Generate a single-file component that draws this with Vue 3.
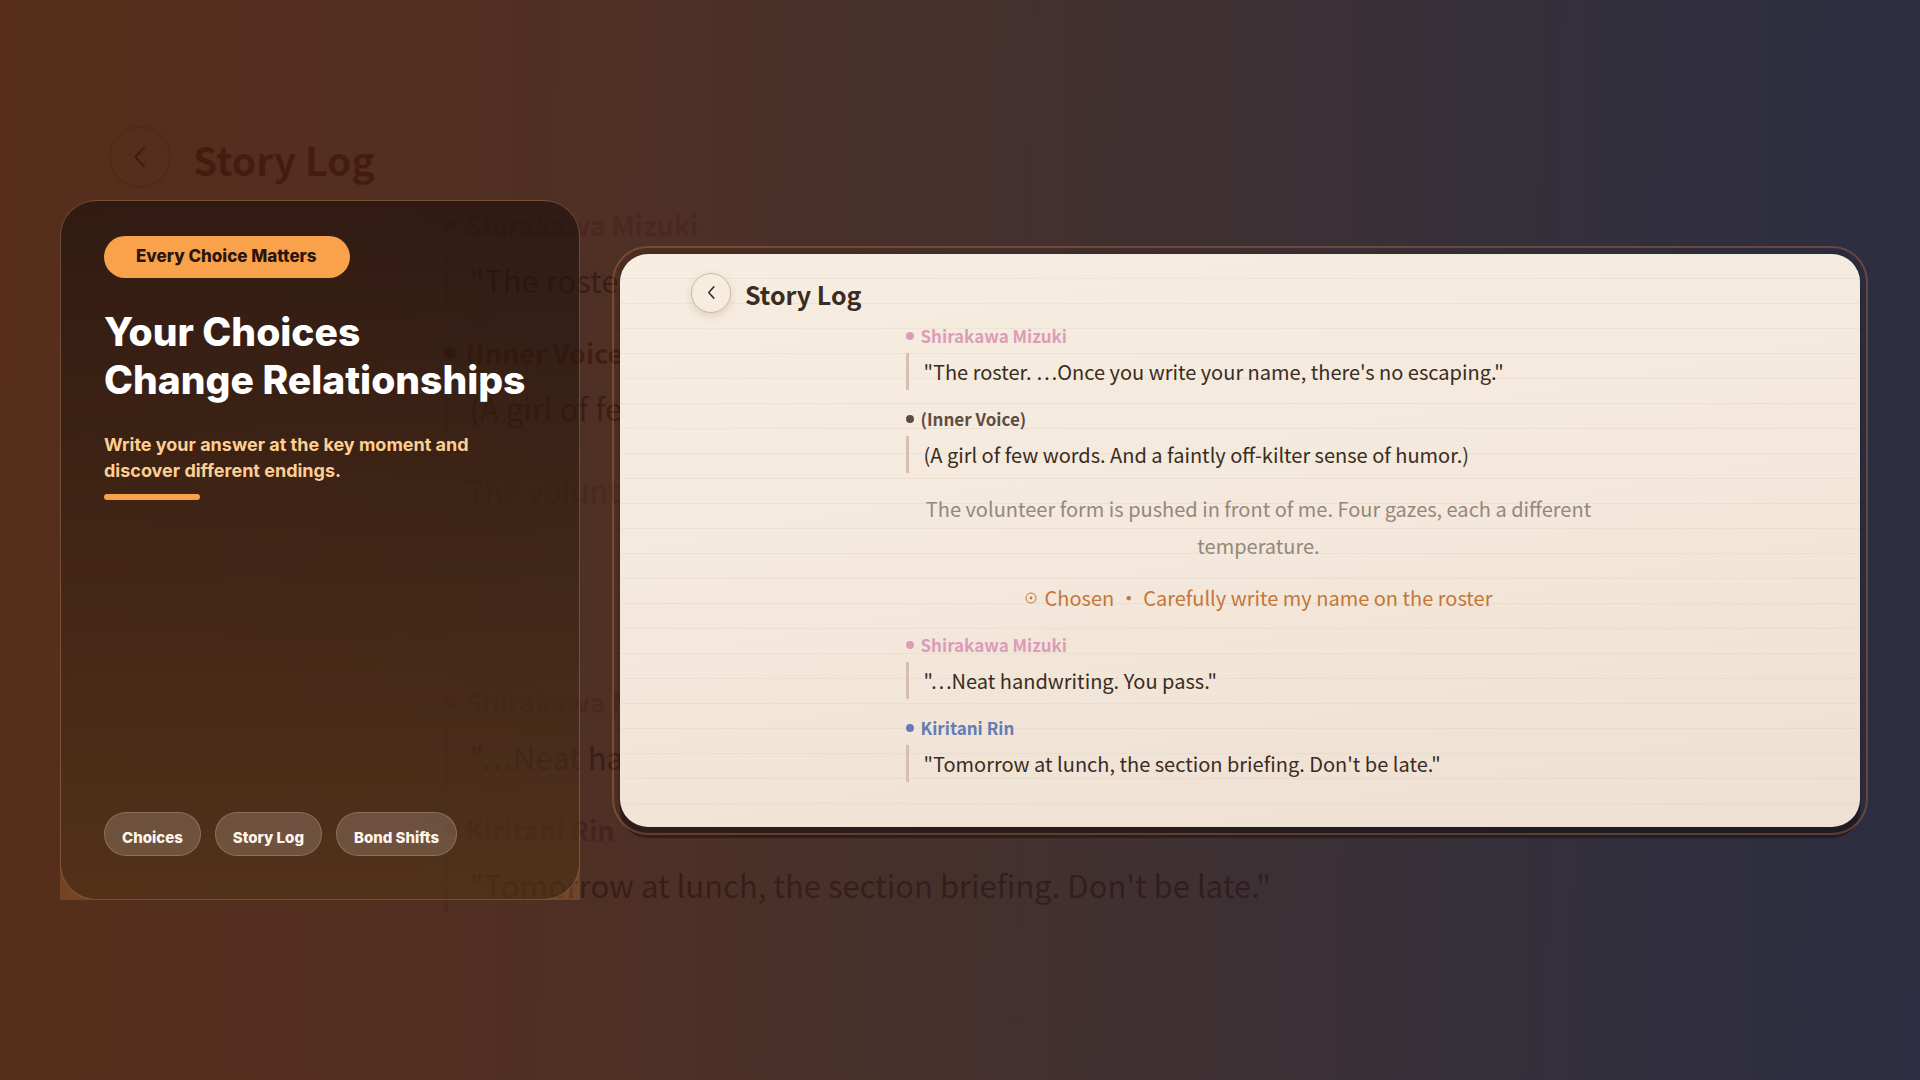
<script setup>
const entries = [
  { kind: 'line', tone: 'pink', name: 'Shirakawa Mizuki', text: '"The roster. …Once you write your name, there\'s no escaping."', peek: '"The roster.' },
  { kind: 'line', tone: 'brown', name: '(Inner Voice)', text: '(A girl of few words. And a faintly off-kilter sense of humor.)', peek: '(A girl of few' },
  { kind: 'narration', text: 'The volunteer form is pushed in front of me. Four gazes, each a different temperature.', peek: 'The volunteer' },
  { kind: 'choice', text: 'Chosen ・ Carefully write my name on the roster', peek: '' },
  { kind: 'line', tone: 'pink', name: 'Shirakawa Mizuki', text: '"…Neat handwriting. You pass."', peek: '"…Neat hand' },
  { kind: 'line', tone: 'blue', name: 'Kiritani Rin', text: '"Tomorrow at lunch, the section briefing. Don\'t be late."', peek: '"Tomorrow at lunch, the section briefing. Don\'t be late."' },
]
// The backdrop is mostly covered by the panel, so it carries only the openings of the lines.
const layers = [
  { id: 'backdrop', field: 'peek', hidden: true },
  { id: 'panel', field: 'text', hidden: false },
]
const tags = ['Choices', 'Story Log', 'Bond Shifts']
</script>

<template>
  <main class="page">
    <aside class="card">
      <p class="pill">Every Choice Matters</p>
      <h1 class="headline">Your Choices<br />Change Relationships</h1>
      <p class="lead">Write your answer at the key moment and discover different endings.</p>
      <span class="rule"></span>
      <ul class="tags">
        <li v-for="tag in tags" :key="tag" class="tag">{{ tag }}</li>
      </ul>
    </aside>

    <section v-for="layer in layers" :key="layer.id" :class="['story', layer.id]" :aria-hidden="layer.hidden">
      <header class="bar">
        <button class="back" type="button" aria-label="Back" :tabindex="layer.hidden ? -1 : 0">
          <svg class="chevron" viewBox="0 0 16 16" fill="none" stroke="currentColor" stroke-width="1.6" stroke-linecap="round" stroke-linejoin="round">
            <path d="M10.5 2 L5 8 L10.5 14" />
          </svg>
        </button>
        <h2 class="title">Story Log</h2>
      </header>
      <div class="log">
        <article v-for="(entry, i) in entries" :key="i" :class="['entry', entry.kind, entry.tone]">
          <template v-if="entry.kind === 'line'">
            <h3 class="name"><span class="dot"></span>{{ entry.name }}</h3>
            <p class="quote">{{ entry[layer.field] }}</p>
          </template>
          <template v-else>
            <svg v-if="entry.kind === 'choice' && !layer.hidden" class="mark" viewBox="0 0 12 12" fill="none" stroke="currentColor">
              <circle cx="6" cy="6" r="5" />
              <circle cx="6" cy="6" r="1.4" fill="currentColor" stroke="none" />
            </svg>
            <p class="body">{{ entry[layer.field] }}</p>
          </template>
        </article>
      </div>
    </section>
  </main>
</template>

<style>
body {
  margin: 0;
  background: #2c2c42;
}
</style>

<style scoped>
.page {
  position: relative;
  isolation: isolate;
  box-sizing: border-box;
  display: flex;
  align-items: center;
  gap: 40px;
  min-height: 100vh;
  padding: 60px;
  overflow: hidden;
  background: linear-gradient(91deg, #562e1b 0%, #532f20 20%, #4c3027 38%, #403032 60%, #34303b 80%, #2c2d42 100%);
  font-family: "Noto Sans CJK JP", "Noto Sans", sans-serif;
}
h1, h2, h3, p, ul {
  margin: 0;
  padding: 0;
}

/* promo card */
.card {
  position: relative;
  box-sizing: border-box;
  display: flex;
  flex-direction: column;
  align-items: flex-start;
  flex: none;
  width: 520px;
  min-height: 700px;
  margin-top: 20px;
  padding: 35px 43px 43px;
  border: 1px solid rgba(255, 190, 150, 0.28);
  border-radius: 36px;
  background: linear-gradient(180deg, rgba(28, 15, 12, 0.62), rgba(56, 36, 18, 0.58));
  font-family: Inter, sans-serif;
}
.card::after {
  content: "";
  position: absolute;
  inset: -1px;
  z-index: -1;
  background: linear-gradient(180deg, rgba(250, 155, 60, 0) 0%, rgba(250, 155, 60, 0.2) 100%);
}
.pill {
  padding: 0 33px 2px 32px;
  border-radius: 21px;
  background: #f9a14b;
  color: #2a160c;
  font-size: 17px;
  font-weight: 800;
  line-height: 40px;
}
.headline {
  margin-top: 30px;
  color: #fff;
  font-size: 39px;
  font-weight: 800;
  line-height: 48px;
  white-space: nowrap;
}
.lead {
  margin-top: 28px;
  color: #fdcf92;
  font-size: 18px;
  font-weight: 700;
  line-height: 26px;
}
.rule {
  width: 96px;
  height: 6px;
  margin-top: 10px;
  border-radius: 3px;
  background: #f9a14b;
}
.tags {
  display: flex;
  gap: 14px;
  margin-top: auto;
  list-style: none;
}
.tag {
  box-sizing: border-box;
  height: 44px;
  padding: 4px 17px 0;
  border: 1px solid rgba(255, 235, 220, 0.2);
  border-radius: 22px;
  background: rgba(255, 240, 235, 0.18);
  color: #fff5ec;
  font-size: 15px;
  font-weight: 800;
  line-height: 42px;
}

/* story log, shared by the panel and its enlarged backdrop */
.bar {
  display: flex;
  align-items: center;
}
.back {
  box-sizing: border-box;
  display: flex;
  align-items: center;
  justify-content: center;
  padding: 0;
  border-style: solid;
  border-radius: 50%;
  color: inherit;
}
.log {
  display: flex;
  flex-direction: column;
  margin: 0 auto;
}
.name {
  display: flex;
  align-items: center;
  font-weight: 700;
}
.dot {
  border-radius: 50%;
  background: currentColor;
}
.quote {
  border-left-style: solid;
}
.choice {
  display: flex;
  align-items: center;
  justify-content: center;
}

.panel {
  position: relative;
  flex: 1;
  box-sizing: border-box;
  min-width: 0;
  min-height: 572px;
  padding: 19px 34px 45px 71px;
  border-radius: 28px;
  background:
    repeating-linear-gradient(180deg, transparent 0 24px, rgba(150, 110, 80, 0.07) 24px 25px),
    linear-gradient(170deg, #f6eee1 0%, #f3e8db 50%, #eee0d2 100%);
  box-shadow: 0 11px 1px rgba(18, 12, 14, 0.5), 0 0 8px rgba(18, 12, 14, 0.2);
  color: #3a2c22;
}
.panel::before {
  content: "";
  position: absolute;
  inset: -8px;
  border: 2px solid rgba(220, 130, 70, 0.32);
  border-radius: 36px;
  pointer-events: none;
}
.panel .bar {
  gap: 14px;
  height: 40px;
}
.panel .back {
  width: 40px;
  height: 40px;
  border-width: 1px;
  border-color: #d2b8a0;
  background: #f6ecdf;
  box-shadow: 0 3px 8px rgba(120, 80, 50, 0.18);
}
.panel .chevron {
  width: 15px;
  height: 15px;
}
.panel .title {
  padding-top: 3px;
  font-size: 25px;
  line-height: 40px;
}
.panel .log {
  gap: 16px;
  max-width: 706px;
  margin-top: 10px;
}
.panel .name {
  gap: 7px;
  padding-bottom: 4px;
  font-size: 17px;
  line-height: 26px;
}
.panel .dot {
  width: 8px;
  height: 8px;
}
.panel .quote {
  padding: 1px 0 0 15px;
  border-left-width: 3px;
  border-color: #d6bfb0;
  font-size: 20px;
  line-height: 36px;
}
.panel .pink .name { color: #dc9cb8; }
.panel .brown .name { color: #5f4c42; }
.panel .blue .name { color: #647cb4; }
.panel .narration {
  padding-top: 1px;
  color: #94887a;
  font-size: 20px;
  line-height: 37px;
  text-align: center;
}
.panel .choice {
  gap: 8px;
  color: #c67637;
  font-size: 20px;
  line-height: 36px;
}
.panel .mark {
  width: 12px;
  height: 12px;
}

.backdrop {
  position: absolute;
  inset: 0;
  z-index: -2;
  box-sizing: border-box;
  display: flex;
  flex-direction: column;
  padding: 126px 50px 0 109px;
  color: rgba(48, 8, 0, 0.46);
}
.backdrop .bar {
  gap: 22px;
  height: 62px;
}
.backdrop .back {
  width: 62px;
  height: 62px;
  border-width: 2px;
  border-color: rgba(70, 20, 0, 0.16);
  background: transparent;
}
.backdrop .chevron {
  width: 24px;
  height: 24px;
}
.backdrop .title {
  padding-top: 3px;
  font-size: 39px;
  line-height: 62px;
}
.backdrop .log {
  gap: 25px;
  width: 100%;
  max-width: 1092px;
  margin-top: 17px;
}
.backdrop .name {
  gap: 10px;
  padding-bottom: 6px;
  font-size: 27px;
  line-height: 40px;
}
.backdrop .dot {
  width: 12px;
  height: 12px;
}
.backdrop .quote {
  padding-left: 22px;
  border-left-width: 4px;
  border-color: rgba(60, 12, 6, 0.14);
  color: rgba(30, 8, 6, 0.44);
}
.backdrop .quote,
.backdrop .body {
  font-size: 31px;
  line-height: 57px;
}
.backdrop .pink .name { color: rgba(70, 12, 16, 0.26); }
.backdrop .blue .name { color: rgba(46, 10, 26, 0.32); }
.backdrop .narration {
  height: 114px;
  padding-left: 22px;
  color: rgba(60, 16, 12, 0.26);
}
.backdrop .choice {
  height: 57px;
}
</style>
